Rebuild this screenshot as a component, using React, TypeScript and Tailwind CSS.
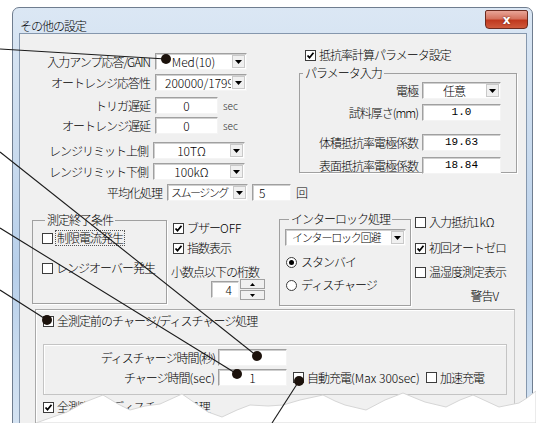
import React from 'react';

const jp = "font-['Noto_Sans_CJK_JP','Noto_Sans',sans-serif]";
const mono = "font-['Liberation_Mono','DejaVu_Sans_Mono',monospace]";

const sunken =
  'bg-white border border-t-[#a0a0a0] border-l-[#a0a0a0] border-r-[#f4f4f4] border-b-[#f4f4f4] shadow-[inset_1px_1px_0_#cfcfcf]';

function Arrow() {
  return (
    <svg width="7" height="4" viewBox="0 0 7 4">
      <path d="M0 0h7L3.5 4z" fill="#000" />
    </svg>
  );
}

function Combo({ w, text, cls = 'text-center' }: { w: string; text: string; cls?: string }) {
  return (
    <div className={`${w} shrink-0 h-[17px] ${sunken} flex items-stretch`}>
      <div className={`flex-1 overflow-hidden whitespace-nowrap leading-[15px] ${cls}`}>{text}</div>
      <div className="w-[13px] m-[1px] bg-[#f0f0f0] border border-[#c9c9c9] flex items-center justify-center">
        <Arrow />
      </div>
    </div>
  );
}

function Field({ w, text = '', cls = '' }: { w: string; text?: string; cls?: string }) {
  return (
    <div className={`${w} shrink-0 h-[17px] ${sunken} text-center leading-[15px] ${cls}`}>{text}</div>
  );
}

function Check({ on = false, label, focus = false }: { on?: boolean; label: React.ReactNode; focus?: boolean }) {
  return (
    <div className="flex items-center gap-[3px] whitespace-nowrap">
      <div className="w-[11px] h-[11px] shrink-0 border border-[#3c3c3c] bg-white flex items-center justify-center">
        {on && (
          <svg width="9" height="9" viewBox="0 0 9 9">
            <path d="M1.5 4.5l2 2.2 4-5" stroke="#000" strokeWidth="1.8" fill="none" />
          </svg>
        )}
      </div>
      <span className={focus ? 'outline outline-1 outline-dotted outline-[#555] px-[1px]' : ''}>{label}</span>
    </div>
  );
}

function Radio({ on = false, label }: { on?: boolean; label: string }) {
  return (
    <div className="flex items-center gap-[4px] whitespace-nowrap">
      <div className="w-[11px] h-[11px] rounded-full border border-[#3c3c3c] bg-white flex items-center justify-center">
        {on && <div className="w-[5px] h-[5px] rounded-full bg-black" />}
      </div>
      <span>{label}</span>
    </div>
  );
}

function Row({ lw, label, children, mt }: { lw: string; label: string; children: React.ReactNode; mt: string }) {
  return (
    <div className={`flex items-center ${mt}`}>
      <div className={`${lw} shrink-0 text-right pr-[5px] whitespace-nowrap`}>{label}</div>
      {children}
    </div>
  );
}

function ParamRow({ label, children, mt }: { label: string; children: React.ReactNode; mt: string }) {
  return (
    <div className={`flex items-center justify-end ${mt}`}>
      <span className="pr-[4px] whitespace-nowrap">{label}</span>
      {children}
    </div>
  );
}

const latin = 'tracking-normal';

export default function App() {
  return (
    <div className={`relative w-[536px] h-[423px] overflow-hidden bg-white text-[12px] leading-[14px] tracking-[-1px] text-black font-light ${jp}`}>
      {/* window frame */}
      <div className="ml-[12px] mt-[7px] w-[521px] h-[440px] rounded-t-[7px] border border-[#6f7d8f] bg-[linear-gradient(180deg,#dbe7f4_0%,#c8daee_35%,#b7cfea_60%,#cadcef_80%,#d8e5f3_100%)] pl-[6px] pr-[5px] flex flex-col">
        <div className="h-[27px] flex items-start justify-between">
          <div className="mt-[11px] ml-[1px]">その他の設定</div>
          <div className="mt-[2px] -mr-[1px] w-[43px] h-[19px] rounded-b-[4px] rounded-t-[2px] border border-[#6b2b20] bg-[linear-gradient(180deg,#e8a598_0%,#d5735f_45%,#c0391f_55%,#cf5a3c_100%)] flex items-center justify-center text-white font-['DejaVu_Sans',sans-serif] font-bold text-[12px] tracking-normal [text-shadow:0_0_2px_#5a1a10]">
            x
          </div>
        </div>
        <div className="flex-1 border border-[#8597ad] bg-[#f0f0f0]">
          {/* top block */}
          <div className="flex">
            <div className="w-[279px] flex flex-col">
              <Row lw="w-[135px]" label="入力アンプ応答/GAIN" mt="mt-[19px]">
                <Combo w="w-[92px]" text="Med(10)" cls={`text-center ${latin}`} />
              </Row>
              <Row lw="w-[135px]" label="オートレンジ応答性" mt="mt-[4px]">
                <Combo w="w-[92px]" text="200000/1799" cls={`pl-[9px] ${latin}`} />
              </Row>
              <Row lw="w-[135px]" label="トリガ遅延" mt="mt-[6px]">
                <Field w="w-[63px]" text="0" cls={latin} />
                <span className="ml-[5px] text-[10px] tracking-normal text-[#333]">sec</span>
              </Row>
              <Row lw="w-[135px]" label="オートレンジ遅延" mt="mt-[3px]">
                <Field w="w-[63px]" text="0" cls={latin} />
                <span className="ml-[5px] text-[10px] tracking-normal text-[#333]">sec</span>
              </Row>
              <Row lw="w-[133px]" label="レンジリミット上側" mt="mt-[8px]">
                <Combo w="w-[92px]" text="10TΩ" cls={`text-center ${latin}`} />
              </Row>
              <Row lw="w-[133px]" label="レンジリミット下側" mt="mt-[4px]">
                <Combo w="w-[92px]" text="100kΩ" cls={`text-center ${latin}`} />
              </Row>
              <Row lw="w-[147px]" label="平均化処理" mt="mt-[4px]">
                <Combo w="w-[81px]" text="スムージング" cls="pl-[3px] text-[11px] tracking-[-1.5px]" />
                <Field w="w-[39px]" text="5" cls={`ml-[4px] !text-left pl-[6px] ${latin}`} />
                <span className="ml-[5px] shrink-0">回</span>
              </Row>
            </div>
            <div className="w-[218px] flex flex-col">
              <div className="mt-[14px] ml-[6px]">
                <Check on label="抵抗率計算パラメータ設定" />
              </div>
              <fieldset className="mt-[4px] h-[107px] border border-[#a0a0a0] shadow-[1px_1px_0_#fff] pr-[15px]">
                <legend className="ml-[3px] px-[2px]">パラメータ入力</legend>
                <ParamRow label="電極" mt="mt-[2px]">
                  <Combo w="w-[79px]" text="任意" />
                </ParamRow>
                <ParamRow label="試料厚さ(mm)" mt="mt-[5px]">
                  <Field w="w-[79px]" text="1.0" cls={`${mono} text-[11px] tracking-normal`} />
                </ParamRow>
                <ParamRow label="体積抵抗率電極係数" mt="mt-[13px]">
                  <Field w="w-[79px]" text="19.63" cls={`${mono} text-[11px] tracking-normal`} />
                </ParamRow>
                <ParamRow label="表面抵抗率電極係数" mt="mt-[6px]">
                  <Field w="w-[79px]" text="18.84" cls={`${mono} text-[11px] tracking-normal`} />
                </ParamRow>
              </fieldset>
            </div>
          </div>

          {/* middle block */}
          <div className="flex items-start mt-[6px]">
            <fieldset className="ml-[12px] mt-[6px] w-[135px] h-[91px] border border-[#a0a0a0] shadow-[1px_1px_0_#fff] pl-[9px]">
              <legend className="ml-[3px] px-[2px]">測定終了条件</legend>
              <div className="mt-[4px]">
                <Check label="制限電流発生" focus />
              </div>
              <div className="mt-[16px]">
                <Check label="レンジオーバー発生" />
              </div>
            </fieldset>
            <div className="ml-[6px] w-[100px] flex flex-col">
              <div className="mt-[14px]">
                <Check on label={<>ブザー<span className={latin}>OFF</span></>} />
              </div>
              <div className="mt-[6px]">
                <Check on label="指数表示" />
              </div>
              <div className="mt-[10px] -ml-[2px]">小数点以下の桁数</div>
              <div className="flex items-center mt-[0px] ml-[38px]">
                <Field w="w-[28px]" text="4" cls={`!text-right pr-[6px] ${latin}`} />
                <div className="ml-[1px] w-[25px] h-[21px] flex flex-col gap-[1px]">
                  <div className="flex-1 bg-[#f0f0f0] border border-[#a0a0a0] flex items-center justify-center">
                    <svg width="5" height="3" viewBox="0 0 5 3"><path d="M0 3h5L2.5 0z" fill="#000" /></svg>
                  </div>
                  <div className="flex-1 bg-[#f0f0f0] border border-[#a0a0a0] flex items-center justify-center">
                    <svg width="5" height="3" viewBox="0 0 5 3"><path d="M0 0h5L2.5 3z" fill="#000" /></svg>
                  </div>
                </div>
              </div>
            </div>
            <fieldset className="ml-[6px] mt-[5px] w-[132px] h-[94px] border border-[#a0a0a0] shadow-[1px_1px_0_#fff] pl-[5px]">
              <legend className="ml-[4px] px-[2px]">インターロック処理</legend>
              <div className="mt-[3px]">
                <Combo w="w-[121px]" text="インターロック回避" cls="text-left pl-[6px] text-[11px] tracking-[-1.2px]" />
              </div>
              <div className="mt-[9px] ml-[1px]">
                <Radio on label="スタンバイ" />
              </div>
              <div className="mt-[9px] ml-[1px]">
                <Radio label="ディスチャージ" />
              </div>
            </fieldset>
            <div className="ml-[4px] flex flex-col">
              <div className="mt-[8px]">
                <Check label={<>入力抵抗<span className={latin}>1kΩ</span></>} />
              </div>
              <div className="mt-[12px]">
                <Check on label="初回オートゼロ" />
              </div>
              <div className="mt-[10px]">
                <Check label="温湿度測定表示" />
              </div>
              <div className="mt-[10px] text-right pr-[8px]">警告V</div>
            </div>
          </div>

          {/* charge / discharge panel */}
          <div className="ml-[15px] mt-[3px] w-[480px] h-[140px] border border-[#a9a9a9] border-r-[#c8c8c8] shadow-[inset_1px_1px_0_#fff] pl-[7px]">
            <div className="mt-[4px]">
              <Check label="全測定前のチャージ/ディスチャージ処理" />
            </div>
            <div className="mt-[16px] w-[464px] h-[51px] border border-[#c4c4c4] shadow-[inset_1px_1px_0_#fff] flex flex-col">
              <div className="flex items-center mt-[4px]">
                <div className="w-[174px] text-right pr-[3px]">ディスチャージ時間(秒)</div>
                <Field w="w-[69px]" />
              </div>
              <div className="flex items-center mt-[3px]">
                <div className="w-[174px] text-right pr-[3px]">
                  チャージ時間<span className={latin}>(sec)</span>
                </div>
                <Field w="w-[69px]" text="1" cls={latin} />
                <div className="ml-[6px]">
                  <Check label={<>自動充電<span className={latin}>(Max 300sec)</span></>} />
                </div>
                <div className="ml-[6px]">
                  <Check label="加速充電" />
                </div>
              </div>
            </div>
            <div className="mt-[5px]">
              <Check on label="全測定後のディスチャージ処理" />
            </div>
            <div className="mt-[7px] w-[464px] h-[40px] border border-[#c4c4c4]" />
          </div>
        </div>
      </div>

      {/* torn edge + callouts */}
      <svg className="absolute inset-0 pointer-events-none" width="536" height="423" viewBox="0 0 536 423">
        <polygon
          points="36,423 50,418 67,412 85,402 103,395 118,404 130,410 145,406 160,404 182,394 195,403 208,412 222,417 237,410 250,405 268,406 283,405 300,400 323,395 335,401 345,405 366,410 385,400 403,393 415,398 425,402 446,407 460,400 473,395 486,401 499,407 519,403 527,398 536,391 536,423"
          fill="#fff"
          stroke="#d6d6d6"
          strokeWidth="1"
        />
        <g stroke="#1a1a1a" strokeWidth="1.1" fill="none">
          <path d="M0 49L166 59" />
          <path d="M0 152L257 356" />
          <path d="M0 228L237 374" />
          <path d="M0 290L47 320" />
          <path d="M299 381L272 423" />
        </g>
        <g fill="#1c120c">
          <circle cx="166" cy="59" r="5" />
          <circle cx="257" cy="356" r="5" />
          <circle cx="237" cy="374" r="5" />
          <circle cx="47" cy="320" r="5" />
          <circle cx="299" cy="381" r="5" />
        </g>
      </svg>
    </div>
  );
}
